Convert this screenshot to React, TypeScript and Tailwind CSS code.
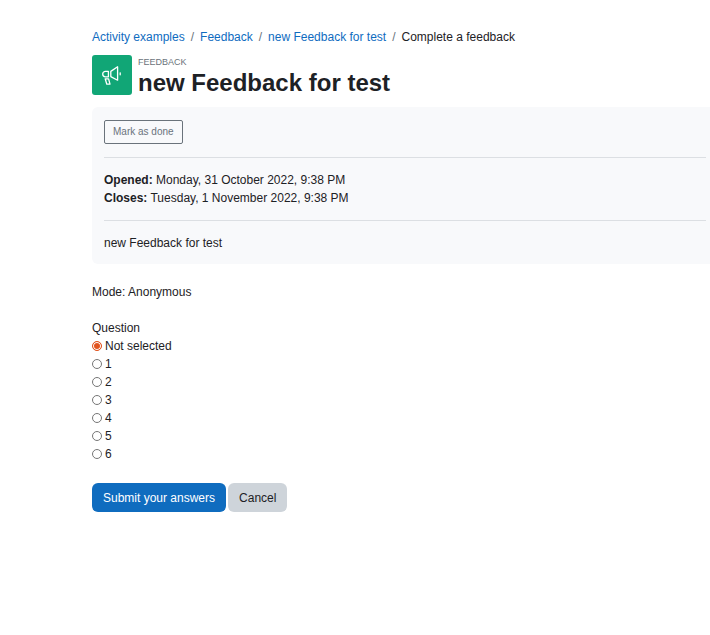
import { Fragment, useState } from "react"

const crumbs = ["Activity examples", "Feedback", "new Feedback for test"]
const options = ["Not selected", "1", "2", "3", "4", "5", "6"]

const MegaphoneIcon = () => {
  return (
    <svg
      className="w-5 h-5"
      viewBox="0 0 20 20"
      fill="none"
      stroke="white"
      strokeWidth="1.3"
      strokeLinejoin="round"
      aria-hidden="true"
    >
      <path d="M6.4 6.4H3.4a2.6 2.6 0 0 0 0 5.4h3z" />
      <path d="M8.8 6.4 15.6 1.8v13.4l-6.8-3.6z" />
      <path d="M3.2 13.8h3.4l1.4 5.4H4.8z" />
      <path d="M18.2 7.8v2" strokeLinecap="round" />
    </svg>
  )
}

function Breadcrumb() {
  return (
    <nav aria-label="Breadcrumb" className="flex flex-wrap">
      {crumbs.map((crumb) => (
        <Fragment key={crumb}>
          <a href="#" className="text-[#0f6cbf] hover:underline">
            {crumb}
          </a>
          <span className="px-[6px] text-[#6a737b]">/</span>
        </Fragment>
      ))}
      <span aria-current="page">Complete a feedback</span>
    </nav>
  )
}

function ActivityHeader() {
  return (
    <header className="mt-[9px] flex gap-[6px]">
      <div className="w-10 h-10 shrink-0 flex items-center justify-center rounded-[3px] bg-[#11a676]">
        <MegaphoneIcon />
      </div>
      <div>
        <div className="pt-px text-[9px] leading-[12px] uppercase text-[#6a737b]">Feedback</div>
        <h1 className="text-2xl leading-[30px] font-bold">new Feedback for test</h1>
      </div>
    </header>
  )
}

function ActivityInfo({ done, onToggle }: { done: boolean; onToggle: () => void }) {
  return (
    <section className="mt-[9px] flex flex-col gap-[13px] rounded-l-md bg-[#f8f9fb] pt-[13px] pr-1 pb-3 pl-3">
      <button
        type="button"
        aria-pressed={done}
        onClick={onToggle}
        className="self-start h-6 px-2 text-[10px] leading-[16px] rounded-xs border border-[#6a737b] text-[#6a737b]"
      >
        Mark as done
      </button>
      <hr className="border-[#dcdfe3]" />
      <div>
        <div>
          <strong>Opened:</strong> Monday, 31 October 2022, 9:38 PM
        </div>
        <div>
          <strong>Closes:</strong> Tuesday, 1 November 2022, 9:38 PM
        </div>
      </div>
      <hr className="border-[#dcdfe3]" />
      <p>new Feedback for test</p>
    </section>
  )
}

function QuestionForm() {
  const [selected, setSelected] = useState("Not selected")

  return (
    <form onSubmit={(e) => e.preventDefault()}>
      <fieldset className="mt-[18px]">
        <legend>Question</legend>
        {options.map((option) => (
          <label key={option} className="flex items-center gap-[3px]">
            <input
              type="radio"
              name="question"
              value={option}
              checked={selected === option}
              onChange={() => setSelected(option)}
              className="appearance-none w-[10px] h-[10px] rounded-full border border-[#767676] bg-white checked:border-[#e2541f] checked:bg-[#e2541f] checked:shadow-[inset_0_0_0_1px_white]"
            />
            {option}
          </label>
        ))}
      </fieldset>
      <div className="mt-5 flex gap-[2px]">
        <button type="submit" className="px-[11px] py-[5px] h-[29px] rounded-md bg-[#0f6cbf] text-white">
          Submit your answers
        </button>
        <button type="button" className="px-[11px] py-[5px] h-[29px] rounded-md bg-[#ced4da] text-[#1d2125]">
          Cancel
        </button>
      </div>
    </form>
  )
}

export default function App() {
  const [done, setDone] = useState(false)

  return (
    <main className="min-h-screen bg-white pt-7 pl-[92px] font-['Liberation_Sans',Arial,sans-serif] text-[12px] leading-[18px] text-[#1d2125]">
      <Breadcrumb />
      <ActivityHeader />
      <ActivityInfo done={done} onToggle={() => setDone(!done)} />
      <p className="mt-[19px]">Mode: Anonymous</p>
      <QuestionForm />
    </main>
  )
}
